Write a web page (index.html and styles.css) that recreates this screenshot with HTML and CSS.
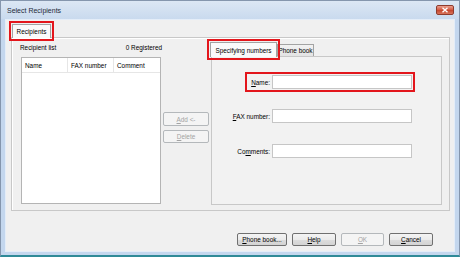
FILE: index.html
```html
<!DOCTYPE html>
<html>
<head>
<meta charset="utf-8">
<link rel="stylesheet" href="styles.css">
</head>
<body>
<div class="window">
  <div class="titlebar">
    <span class="title">Select Recipients</span>
    <span class="close"><svg width="8" height="6" viewBox="0 0 8 6"><path d="M1.5 0.8 L6.5 5.2 M6.5 0.8 L1.5 5.2" stroke="#fff" stroke-width="1.4"/></svg></span>
  </div>
  <div class="client">
    <div class="tabs outer-tabs">
      <div class="tab selected hl">Recipients</div>
    </div>
    <div class="panel">
      <div class="col-list">
        <div class="list-head">
          <span>Recipient list</span>
          <span>0 Registered</span>
        </div>
        <div class="listbox">
          <div class="lv-header">
            <span class="lv-col c1">Name</span>
            <span class="lv-col c2">FAX number</span>
            <span class="lv-col c3">Comment</span>
          </div>
        </div>
      </div>
      <div class="col-mid">
        <div class="btn disabled add"><span class="ak">A</span>dd &lt;-</div>
        <div class="btn disabled del"><span class="ak">D</span>elete</div>
      </div>
      <div class="col-right">
        <div class="tabs inner-tabs">
          <div class="tab selected hl itab1">Specifying numbers</div>
          <div class="tab itab2">Phone book</div>
        </div>
        <div class="inner-panel">
          <div class="form">
            <div class="row name-row hl"><label class="lbl"><span class="ak">N</span>ame:</label><span class="input"></span></div>
            <div class="row"><label class="lbl"><span class="ak">F</span>AX number:</label><span class="input"></span></div>
            <div class="row r3"><label class="lbl">Co<span class="ak">m</span>ments:</label><span class="input"></span></div>
          </div>
        </div>
      </div>
    </div>
    <div class="buttons">
      <div class="btn b-phone"><span class="ak">P</span>hone book...</div>
      <div class="btn b-help"><span class="ak">H</span>elp</div>
      <div class="btn disabled b-ok"><span class="ak">O</span>K</div>
      <div class="btn b-cancel"><span class="ak">C</span>ancel</div>
    </div>
  </div>
</div>
</body>
</html>
```
FILE: styles.css
```css
html, body {
  margin: 0;
  padding: 0;
}
body {
  width: 460px;
  height: 257px;
  overflow: hidden;
  font-family: "Liberation Sans", Arial, sans-serif;
  font-size: 6.4px;
  color: #000;
}
.window {
  width: 460px;
  height: 257px;
  box-sizing: border-box;
  display: flex;
  flex-direction: column;
  background: #c4d7ee;
  border-top: 1px solid #8596ad;
  border-left: 1px solid #8596ad;
  border-right: 1px solid #8596ad;
  border-bottom: 2px solid #2f8a98;
}
.titlebar {
  height: 18px;
  flex: none;
  display: flex;
  align-items: center;
  justify-content: space-between;
  padding: 0 5px 0 6px;
  background: linear-gradient(#dce7f4, #c9daee);
}
.title {
  font-size: 7px;
  color: #1e2a3a;
}
.close {
  width: 18px;
  height: 10px;
  box-sizing: border-box;
  border: 1px solid #8e3b2d;
  border-radius: 2px;
  background: linear-gradient(#eaa08f, #d3573f 50%, #c4432b 51%, #d8735a);
  display: flex;
  align-items: center;
  justify-content: center;
}
.close svg {
  display: block;
}
.client {
  flex: 1;
  margin: 0 4px 3px 4px;
  border: 1px solid #e4edf8;
  background: #f0f0f0;
  padding: 4px 4px 0 5px;
  display: flex;
  flex-direction: column;
}
.tabs {
  display: flex;
  align-items: flex-end;
}
.outer-tabs {
  height: 13px;
  padding-left: 1px;
}
.tab {
  box-sizing: border-box;
  border: 1px solid #a3a3a3;
  border-bottom: none;
  display: flex;
  align-items: center;
  justify-content: center;
  white-space: nowrap;
  background: linear-gradient(#f2f2f2, #e3e3e3);
}
.tab.selected {
  background: #fafafa;
  position: relative;
  z-index: 2;
  margin-bottom: -1px;
}
.outer-tabs .tab {
  width: 39px;
  height: 14px;
}
.hl {
  outline: 2px solid #e3161c;
  outline-offset: 1px;
}
.panel {
  height: 174px;
  box-sizing: border-box;
  border: 1px solid #c8c8c8;
  box-shadow: inset 1px 1px 0 #fff;
  background: #f0f0f0;
  display: flex;
  padding: 0 7px 0 9px;
}
.col-list {
  width: 140px;
  display: flex;
  flex-direction: column;
}
.list-head {
  height: 19px;
  display: flex;
  align-items: center;
  justify-content: space-between;
  margin-left: -1px;
  margin-right: -1px;
}
.listbox {
  height: 147px;
  box-sizing: border-box;
  border: 1px solid #b4b4b4;
  background: #fff;
}
.lv-header {
  height: 14px;
  display: flex;
  border-bottom: 1px solid #e6e6e6;
}
.lv-col {
  display: flex;
  align-items: center;
  padding-left: 3px;
  box-sizing: border-box;
  border-right: 1px solid #e6e6e6;
}
.c1 { width: 46px; }
.c2 { width: 46px; }
.c3 { width: 34px; border-right: none; }
.col-mid {
  width: 49px;
  display: flex;
  flex-direction: column;
  padding-left: 2px;
  box-sizing: border-box;
}
.btn {
  box-sizing: border-box;
  height: 13px;
  border: 1px solid #707070;
  border-radius: 2px;
  background: linear-gradient(#f4f4f4, #ebebeb 50%, #dddddd 51%, #d3d3d3);
  display: flex;
  align-items: center;
  justify-content: center;
  white-space: nowrap;
}
.btn.disabled {
  border-color: #b4b8bb;
  background: #f4f4f4;
  color: #a3a3a3;
}
.add {
  width: 46px;
  height: 14px;
  margin-top: 74px;
}
.del {
  width: 46px;
  margin-top: 4px;
}
.ak {
  text-decoration: underline;
}
.col-right {
  width: 232px;
  padding-top: 4px;
  display: flex;
  flex-direction: column;
}
.inner-tabs {
  height: 14px;
}
.itab1 {
  width: 67px;
  height: 15px;
}
.itab2 {
  width: 37px;
  height: 12px;
  margin-left: 0;
}
.inner-panel {
  margin-left: 1px;
  height: 149px;
  box-sizing: border-box;
  border: 1px solid #c8c8c8;
  background: #f2f2f2;
}
.form {
  display: flex;
  flex-direction: column;
  align-items: flex-end;
  padding: 18px 29px 0 0;
  gap: 20px;
}
.row {
  display: flex;
  align-items: center;
  gap: 2px;
  height: 14px;
}
.name-row {
  padding-left: 3px;
}
.r3 {
  margin-top: 1px;
}
.input {
  width: 140px;
  height: 14px;
  box-sizing: border-box;
  border: 1px solid #c6c6c6;
  background: #fff;
}
.buttons {
  display: flex;
  justify-content: flex-end;
  gap: 5px;
  margin-top: 22px;
  padding-right: 17px;
}
.b-phone { width: 50px; }
.b-help { width: 44px; }
.b-ok { width: 43px; }
.b-cancel { width: 44px; }
```
